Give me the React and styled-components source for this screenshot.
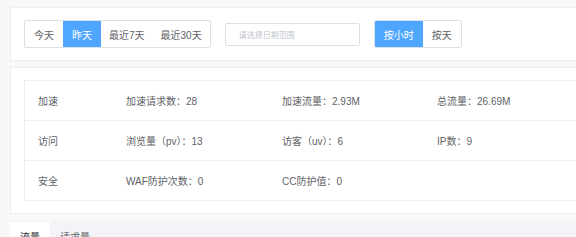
import React from "react";
import styled, { createGlobalStyle } from "styled-components";

const Global = createGlobalStyle`
  html, body { margin: 0; padding: 0; background: #f8f8f8; overflow: hidden; }
  body { font-family: "Liberation Sans", "Noto Sans CJK SC", sans-serif; color: #606266; }
  * { box-sizing: border-box; }
`;

const Page = styled.div`
  width: 640px;
  padding: 7px 0 0 10px;
  display: flex;
  flex-direction: column;
`;

const Card = styled.div`
  background: #fff;
  border: 1px solid #efefef;
  padding: 12px 13px;
  margin-top: ${(p) => p.$mt || 0}px;
`;

const Toolbar = styled.div`
  display: flex;
  align-items: center;
  gap: 14px;
`;

const Group = styled.div`
  display: flex;
  height: 28px;
  border: 1px solid #dcdfe6;
  border-radius: 2px;
  overflow: hidden;
`;

const Btn = styled.div`
  display: flex;
  align-items: center;
  padding: 0 ${(p) => p.$pad || 9}px;
  font-size: 10px;
  background: ${(p) => (p.$active ? "#4ea6ff" : "#fff")};
  color: ${(p) => (p.$active ? "#fff" : "#606266")};
  white-space: nowrap;
`;

const DateInput = styled.div`
  width: 135px;
  height: 23px;
  border: 1px solid #dcdfe6;
  border-radius: 2px;
  display: flex;
  align-items: center;
  padding-left: 13px;
  font-size: 8px;
  color: #c0c4cc;
`;

const Table = styled.div`
  border-top: 1px solid #ebeef5;
  border-left: 1px solid #ebeef5;
`;

const Row = styled.div`
  display: grid;
  grid-template-columns: 88px 156px 155px 155px 1fr;
  height: 40px;
  border-bottom: 1px solid #ebeef5;
`;

const Cell = styled.div`
  display: flex;
  align-items: center;
  padding-left: 13px;
  font-size: 10px;
  color: #606266;
  white-space: nowrap;
`;

const TabBar = styled.div`
  margin-top: 6px;
  background: #f3f4f8;
  padding-top: 2px;
  display: flex;
  height: 40px;
`;

const Tab = styled.div`
  padding: 0 10px;
  height: 28px;
  display: flex;
  align-items: center;
  font-size: 10px;
  background: ${(p) => (p.$active ? "#fff" : "transparent")};
  color: ${(p) => (p.$active ? "#303133" : "#606266")};
`;

const rows = [
  ["加速", "加速请求数：28", "加速流量：2.93M", "总流量：26.69M"],
  ["访问", "浏览量（pv）：13", "访客（uv）：6", "IP数：9"],
  ["安全", "WAF防护次数：0", "CC防护值：0", ""],
];

export default function App() {
  return (
    <>
      <Global />
      <Page>
        <Card>
          <Toolbar>
            <Group>
              <Btn>今天</Btn>
              <Btn $active>昨天</Btn>
              <Btn $pad={8}>最近7天</Btn>
              <Btn $pad={8}>最近30天</Btn>
            </Group>
            <DateInput>请选择日期范围</DateInput>
            <Group>
              <Btn $active>按小时</Btn>
              <Btn>按天</Btn>
            </Group>
          </Toolbar>
        </Card>
        <Card $mt={6}>
          <Table>
            {rows.map((r, i) => (
              <Row key={i}>
                {r.map((c, j) => (
                  <Cell key={j}>{c}</Cell>
                ))}
                <Cell />
              </Row>
            ))}
          </Table>
        </Card>
        <TabBar>
          <Tab $active>流量</Tab>
          <Tab>请求量</Tab>
        </TabBar>
      </Page>
    </>
  );
}
